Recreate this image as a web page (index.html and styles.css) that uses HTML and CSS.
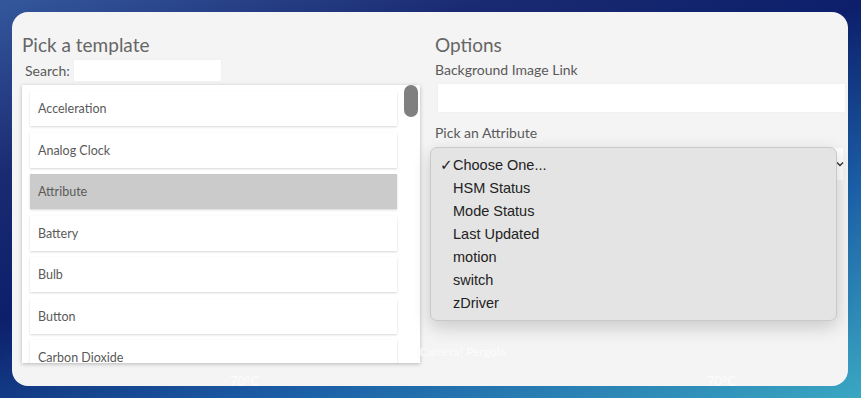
FILE: index.html
```html
<!DOCTYPE html>
<html>
  <head>
    <link rel="stylesheet" href="styles.css">
  </head>
  <body>
    <div class="modal">
      <div class="ghost ghost-camera">[Camera] Pergola</div>
      <div class="ghost ghost-temp-left">70°C</div>
      <div class="ghost ghost-temp-right">70°C</div>

      <div class="column templates">
        <div class="title">Pick a template</div>
        <div class="search">
          <span class="label">Search:</span>
          <div class="search-input"></div>
        </div>
        <div class="list-box">
          <div class="list">
            <div class="item">Acceleration</div>
            <div class="item">Analog Clock</div>
            <div class="item selected">Attribute</div>
            <div class="item">Battery</div>
            <div class="item">Bulb</div>
            <div class="item">Button</div>
            <div class="item">Carbon Dioxide</div>
          </div>
          <div class="track">
            <div class="thumb"></div>
          </div>
        </div>
      </div>

      <div class="column options">
        <div class="title">Options</div>
        <div class="label">Background Image Link</div>
        <div class="text-input"></div>
        <div class="label attr-label">Pick an Attribute</div>
        <div class="select-wrap">
          <div class="select">
            <svg class="chevron" width="10" height="10" viewBox="0 0 10 10"><path d="M2 3.5 L5 6.5 L8 3.5" fill="none" stroke="#333" stroke-width="1.4"/></svg>
          </div>
          <div class="menu">
            <div class="option"><span class="check">✓</span>Choose One...</div>
            <div class="option"><span class="check"></span>HSM Status</div>
            <div class="option"><span class="check"></span>Mode Status</div>
            <div class="option"><span class="check"></span>Last Updated</div>
            <div class="option"><span class="check"></span>motion</div>
            <div class="option"><span class="check"></span>switch</div>
            <div class="option"><span class="check"></span>zDriver</div>
          </div>
        </div>
      </div>
    </div>
  </body>
</html>
```

FILE: styles.css
```css
html, body {
  margin: 0;
  height: 100%;
}

body {
  width: 861px;
  height: 398px;
  overflow: hidden;
  background: linear-gradient(160deg, #34579c 0%, #1a2a72 25%, #0d1f6b 45%, #1b5ea6 70%, #3aa7c2 100%);
  font-family: Lato, "Open Sans", sans-serif;
  color: #555;
}

.modal {
  position: relative;
  margin: 12px 0 0 12px;
  width: 826px;
  height: 353px;
  padding: 21px 0 0 10px;
  background: #f4f4f4;
  border-radius: 16px;
  display: flex;
  gap: 15px;
}

.ghost {
  position: absolute;
  color: #fcfcfc;
  font-size: 12px;
}
.ghost-camera { left: 404px; top: 332px; }
.ghost-temp-left { left: 218px; top: 361px; font-size: 13px; }
.ghost-temp-right { left: 695px; top: 361px; font-size: 13px; }

.column {
  display: flex;
  flex-direction: column;
}

.templates {
  width: 398px;
}

.options {
  width: 410px;
  position: relative;
}

.title {
  font-size: 19px;
  line-height: 24px;
  color: #666;
}

.label {
  font-size: 14px;
  line-height: 18px;
  color: #5a5a5a;
}

.search {
  display: flex;
  align-items: center;
  gap: 4px;
  margin-top: 3px;
  padding-left: 3px;
}

.search-input {
  width: 147px;
  height: 21px;
  background: #fff;
  box-shadow: 0 0 1px rgba(0, 0, 0, 0.08);
}

.list-box {
  margin-top: 4px;
  height: 278px;
  background: #fff;
  box-shadow: 0 1px 4px rgba(0, 0, 0, 0.25);
  display: flex;
  overflow: hidden;
}

.list {
  flex: 1;
  padding: 6px 0 0 8px;
  display: flex;
  flex-direction: column;
  gap: 6.5px;
}

.item {
  height: 35px;
  flex-shrink: 0;
  display: flex;
  align-items: center;
  padding-left: 8px;
  font-size: 12.5px;
  color: #5a5a5a;
  background: #fff;
  box-shadow: 0 1px 2px rgba(0, 0, 0, 0.16);
}

.item.selected {
  background: #cbcbcb;
}

.track {
  width: 23px;
  padding-left: 7px;
  box-sizing: border-box;
}

.thumb {
  width: 14px;
  height: 32px;
  background: #808080;
  border-radius: 7px;
}

.options .label {
  margin-top: 4px;
}

.text-input {
  margin: 5px 0 0 3px;
  height: 28px;
  background: #fff;
  box-shadow: 0 0 1px rgba(0, 0, 0, 0.08);
}

.options .attr-label {
  margin-top: 12px;
}

.select-wrap {
  position: relative;
  margin-top: 6px;
}

.select {
  margin-left: 3px;
  width: 405px;
  height: 32px;
  background: #fff;
  display: flex;
  align-items: center;
  justify-content: flex-end;
}

.chevron {
  margin-right: -2px;
}

.menu {
  position: absolute;
  left: -5px;
  top: -1px;
  width: 405px;
  padding: 6px 0 5px;
  background: #e4e4e4;
  border: 1px solid #c9c9c9;
  border-radius: 7px;
  box-shadow: 0 6px 18px rgba(0, 0, 0, 0.18);
  font-family: "Liberation Sans", Arial, sans-serif;
  font-size: 14.5px;
  color: #222;
}

.option {
  height: 23px;
  line-height: 23px;
  display: flex;
  padding-left: 9px;
}

.check {
  width: 13px;
  font-size: 15px;
  font-family: "DejaVu Sans", sans-serif;
}
```
